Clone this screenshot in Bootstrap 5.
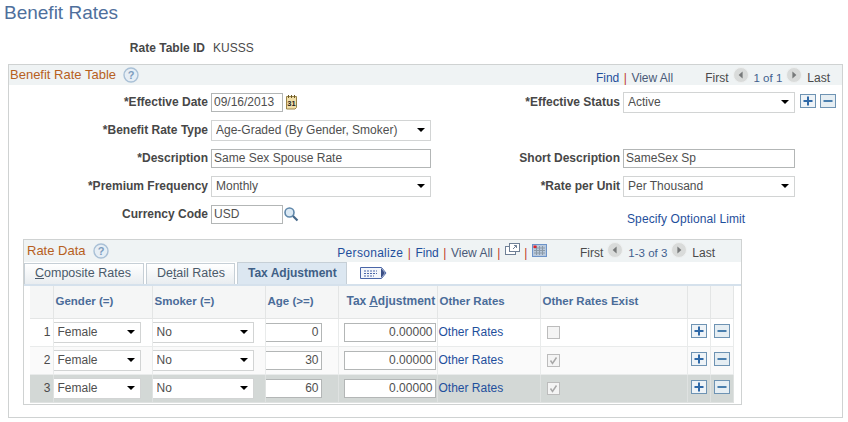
<!DOCTYPE html>
<html lang="en">
<head>
<meta charset="utf-8">
<title>Benefit Rates</title>
<link href="https://cdn.jsdelivr.net/npm/bootstrap@5.3.0/dist/css/bootstrap.min.css" rel="stylesheet">
<style>
html,body{background:#fff;margin:0;overflow:hidden}
body{font:12px/14px "Liberation Sans",Arial,sans-serif;color:#4a4a4a;width:848px;height:422px}
a{color:#1f4f9c;text-decoration:none}
.page-title{font-size:19px;line-height:24px;color:#4f6f9c;margin:0;padding:1px 0 0 4px;height:25px;font-weight:400}
.id-line{height:14px;margin-top:16px;padding-left:9px}
.lbl{font-weight:700;color:#474747;text-align:right}
.outer-box{margin:9px 0 0 8px;width:835px;height:354px;border:1px solid #cfd2d2}
.band{background:#eff3f4;display:flex;align-items:center}
.outer-band{height:20px;padding:0 12px 0 1px}
.band-title{color:#b75f1e;font-size:13px;line-height:16px}
.help{margin-left:7px;flex:none}
.sep{color:#c0392b;padding:0 4.500px}
.nav-ico{flex:none;margin:0 5px 6px 4px}
.tool-ico{flex:none;margin-bottom:6px}
.page-count{color:#3f5f8e;font-size:11.500px}
.grey-link{color:#4a5a78}
.wide-link{letter-spacing:.3px}
.form-rows{display:grid;grid-template-columns:199px 220px 186px 172px auto;column-gap:3px;grid-auto-rows:28px;align-items:center;margin-top:3px;height:140px}
.form-rows .form-control,.form-rows .form-select,.sheet .form-control,.sheet .form-select{font:12px/14px "Liberation Sans",Arial,sans-serif;color:#4f4f4f;border-radius:0;height:19px;min-height:0;padding:0 2px;border:1px solid #b3b6b6;box-shadow:none}
.form-select{background-color:#fff;background-image:url("data:image/svg+xml,%3Csvg xmlns='http://www.w3.org/2000/svg' width='8' height='4'%3E%3Cpath d='M0 0h8L4 4z' fill='%23000'/%3E%3C/svg%3E");background-repeat:no-repeat;background-position:right 5px center;background-size:8px 4px;padding-left:4px!important;border-color:#d2d4d4!important;height:21px!important}
.wide-field{width:220px}
.date-field{width:72px}
.code-field{width:72px}
.addrem{display:flex;gap:4px;padding:0 0 2px 2px}
.pm{width:16px;height:14px;flex:none;display:block}
.limit-cell{padding:12px 0 0 4px;align-self:start;letter-spacing:.1px}
.inner-box{margin:11px 0 0 14px;width:719px;height:166px;border:1px solid #cfd2d2}
.inner-band{height:22px;padding:0 26px 0 3px}
.grid-links{margin-left:auto;display:flex;align-items:center;padding-top:6px}
.inner-band .grid-links{padding-top:4px}
.paging{display:flex;align-items:center;padding-top:6px}
.inner-band .paging{padding-top:4px;margin-left:33px}
.outer-band .paging{margin-left:32px}
.tabstrip{display:flex;height:24px;align-items:flex-end;gap:2px;padding-left:0;border-bottom:2px solid #d5e1ec}
.tabbish{height:21px;padding:2px 9px 0 10px;border:1px solid #c6cfd6;border-bottom:0;background:linear-gradient(#fff,#e9edf0);font-size:12.500px;color:#4a5a6a}
.tab-first{padding-right:12px}
.tabbish.on{background:#dce7f1;font-weight:700;font-size:12px;color:#3f5f86;height:22px;padding-top:3px}
.tabmore{align-self:center;margin-left:11px}
.sheet{border-collapse:collapse;table-layout:fixed;width:703px;margin-left:6px}
.sheet th{height:32px;background:#f5f6f6;color:#4a6c99;font-weight:700;font-size:11.500px;padding:0 0 1px 2px;border-right:1px solid #e3e5e5;border-bottom:1px solid #e3e5e5;white-space:nowrap}
.sheet th.tax-head{font-size:12px;padding-left:8px}
.sheet td{height:28px;padding:0;border-right:1px solid #e9ebeb;border-bottom:1px solid #e9ebeb;vertical-align:middle}
.sheet tr.alt td{background:#fafafa}
.sheet tr.picked td{background:#d3d8d6;border-color:#dfe2e1}
.sheet td.rn{text-align:right;padding:0 2px 0 0}
.sheet td.linkcell{padding-left:1px}
.sheet .sel-g{width:88px;margin-left:-1px}
.sheet .sel-s{width:102px;margin-left:-1px}
.sheet .age-in{width:57px;margin-left:-1px}
.sheet .tax-in{width:92px;margin-left:5px}
.chk{display:block;margin-left:6px}
.cell-pm{display:block;margin:-2px auto 0}
</style>
</head>
<body>
<svg width="0" height="0" class="position-absolute">
<defs>
<symbol id="i-help" viewBox="0 0 16 16"><circle cx="8" cy="8" r="7" fill="#e6eef5" stroke="#a9c0d6" stroke-width="1.4"/><text x="8" y="12" text-anchor="middle" font-family="Liberation Sans" font-size="11" font-weight="700" fill="#7d9cbd">?</text></symbol>
<symbol id="i-prev" viewBox="0 0 16 16"><circle cx="8" cy="8" r="7.500" fill="#d9dbda" stroke="#eef0f0"/><path d="M9.600 4.400v7L5.600 8z" fill="#77797a"/></symbol>
<symbol id="i-next" viewBox="0 0 16 16"><circle cx="8" cy="8" r="7.500" fill="#d9dbda" stroke="#eef0f0"/><path d="M6.400 4.400v7l4-3.400z" fill="#77797a"/></symbol>
<symbol id="i-plus" viewBox="0 0 16 14"><rect x=".5" y=".5" width="15" height="13" fill="#eef3f7" stroke="#6e93b3"/><path d="M7 2.500h2v3.500h3.500v2H9v3.500H7V8H3.500V6H7z" fill="#2f69a8"/></symbol>
<symbol id="i-minus" viewBox="0 0 16 14"><rect x=".5" y=".5" width="15" height="13" fill="#e6eef3" stroke="#6e93b3"/><rect x="3.500" y="6" width="9" height="2" fill="#4a7fae"/></symbol>
</defs>
</svg>

<h1 class="page-title">Benefit Rates</h1>
<div class="id-line d-flex">
  <span class="lbl" style="width:196px">Rate Table ID</span><span class="ms-2">KUSSS</span>
</div>

<div class="outer-box">
  <div class="band outer-band">
    <span class="band-title">Benefit Rate Table</span>
    <svg class="help" width="16" height="16"><use href="#i-help"/></svg>
    <div class="grid-links"><a href="#">Find</a><span class="sep">|</span><a href="#" class="grey-link">View All</a></div>
    <div class="paging"><span>First</span><svg class="nav-ico" width="16" height="16"><use href="#i-prev"/></svg><span class="page-count">1 of 1</span><svg class="nav-ico" width="16" height="16"><use href="#i-next"/></svg><span>Last</span></div>
  </div>

  <div class="form-rows">
    <div class="lbl">*Effective Date</div>
    <div class="d-flex align-items-center"><input class="form-control date-field" value="09/16/2013">
      <svg style="margin-left:2px" width="13" height="16" viewBox="0 0 13 16"><path d="M1.500 2.500h10v11l-1.500 1.500h-8.500z" fill="#f1dfa8" stroke="#9a8448"/><path d="M3.500 1v3M6.500 1v3M9.500 1v3" stroke="#6b5a2a"/><text x="6.500" y="12" text-anchor="middle" font-family="Liberation Sans" font-size="7.500" font-weight="700" fill="#222">31</text></svg></div>
    <div class="lbl">*Effective Status</div>
    <select class="form-select"><option>Active</option></select>
    <div class="addrem"><svg class="pm"><use href="#i-plus"/></svg><svg class="pm"><use href="#i-minus"/></svg></div>

    <div class="lbl">*Benefit Rate Type</div>
    <select class="form-select wide-field"><option>Age-Graded (By Gender, Smoker)</option></select>
    <div></div><div></div><div></div>

    <div class="lbl">*Description</div>
    <input class="form-control wide-field" value="Same Sex Spouse Rate">
    <div class="lbl">Short Description</div>
    <input class="form-control" value="SameSex Sp">
    <div></div>

    <div class="lbl">*Premium Frequency</div>
    <select class="form-select wide-field"><option>Monthly</option></select>
    <div class="lbl">*Rate per Unit</div>
    <select class="form-select"><option>Per Thousand</option></select>
    <div></div>

    <div class="lbl">Currency Code</div>
    <div class="d-flex align-items-center"><input class="form-control code-field" value="USD">
      <svg width="16" height="16" viewBox="0 0 16 16"><circle cx="6.500" cy="6.500" r="4.500" fill="#dbe9f4" stroke="#5f87aa" stroke-width="1.600"/><path d="M10 10l4.500 4.500" stroke="#47698a" stroke-width="2.200"/></svg></div>
    <div></div>
    <div class="limit-cell"><a href="#">Specify Optional Limit</a></div>
    <div></div>
  </div>

  <div class="inner-box">
    <div class="band inner-band">
      <span class="band-title">Rate Data</span>
      <svg class="help" width="16" height="16"><use href="#i-help"/></svg>
      <div class="grid-links"><a href="#" class="wide-link">Personalize</a><span class="sep">|</span><a href="#">Find</a><span class="sep">|</span><a href="#" class="grey-link">View All</a><span class="sep">|</span>
        <svg width="15" height="14" viewBox="0 0 15 14" class="tool-ico"><rect x=".5" y="3.500" width="10" height="8" fill="#fff" stroke="#6f8096"/><rect x="4.500" y=".5" width="10" height="8" fill="#fff" stroke="#6f8096"/><path d="M8 6l3.500-3.500M9 2.500h2.500V5" fill="none" stroke="#6f8096"/></svg>
        <span class="sep">|</span>
        <svg width="15" height="13" viewBox="0 0 15 13" class="tool-ico"><rect x=".5" y=".5" width="14" height="12" fill="#b9c9dc" stroke="#6c93c9"/><path d="M2 4h11M2 6.500h11M2 9h11M4.500 2v9M7.500 2v9M10.500 2v9" stroke="#8b9aa8"/><rect x="1.500" y="1.500" width="3" height="2.500" fill="#e0202a"/></svg>
      </div>
      <div class="paging"><span>First</span><svg class="nav-ico" width="16" height="16"><use href="#i-prev"/></svg><span class="page-count">1-3 of 3</span><svg class="nav-ico" width="16" height="16"><use href="#i-next"/></svg><span>Last</span></div>
    </div>
    <div class="tabstrip">
      <div class="tabbish tab-first"><u>C</u>omposite Rates</div>
      <div class="tabbish">De<u>t</u>ail Rates</div>
      <div class="tabbish on">Tax Adjustment</div>
      <svg class="tabmore" width="27" height="14" viewBox="0 0 27 14"><path d="M.5 1.500h21l4.500 5.500-4.500 5.500H.5z" fill="#f3f6fb" stroke="#4a66a8"/><path d="M21 2v10l4-5z" fill="#3a4f86"/><path d="M4 5h13M4 7.500h13M4 10h10" stroke="#4a66a8" stroke-dasharray="2 1"/></svg>
    </div>
    <table class="sheet">
      <colgroup><col style="width:23px"><col style="width:99px"><col style="width:113px"><col style="width:73px"><col style="width:99px"><col style="width:103px"><col style="width:147px"><col style="width:23px"><col style="width:23px"></colgroup>
      <thead><tr><th></th><th>Gender (=)</th><th>Smoker (=)</th><th>Age (&gt;=)</th><th class="tax-head">Tax <u>A</u>djustment</th><th>Other Rates</th><th>Other Rates Exist</th><th></th><th></th></tr></thead>
      <tbody>
        <tr><td class="rn">1</td><td><select class="form-select sel-g"><option>Female</option></select></td><td><select class="form-select sel-s"><option>No</option></select></td><td><input class="form-control age-in text-end" value="0"></td><td><input class="form-control tax-in text-end" value="0.00000"></td><td class="linkcell"><a href="#">Other Rates</a></td><td><svg class="chk" width="13" height="13"><rect x=".5" y=".5" width="12" height="12" fill="#f4f4f4" stroke="#bcbcbc"/></svg></td><td><svg class="pm cell-pm"><use href="#i-plus"/></svg></td><td><svg class="pm cell-pm"><use href="#i-minus"/></svg></td></tr>
        <tr class="alt"><td class="rn">2</td><td><select class="form-select sel-g"><option>Female</option></select></td><td><select class="form-select sel-s"><option>No</option></select></td><td><input class="form-control age-in text-end" value="30"></td><td><input class="form-control tax-in text-end" value="0.00000"></td><td class="linkcell"><a href="#">Other Rates</a></td><td><svg class="chk" width="13" height="13"><rect x=".5" y=".5" width="12" height="12" fill="#f4f4f4" stroke="#bcbcbc"/><path d="M3.500 6.500l2 3 4-6" fill="none" stroke="#a8a8a8" stroke-width="1.500"/></svg></td><td><svg class="pm cell-pm"><use href="#i-plus"/></svg></td><td><svg class="pm cell-pm"><use href="#i-minus"/></svg></td></tr>
        <tr class="picked"><td class="rn">3</td><td><select class="form-select sel-g"><option>Female</option></select></td><td><select class="form-select sel-s"><option>No</option></select></td><td><input class="form-control age-in text-end" value="60"></td><td><input class="form-control tax-in text-end" value="0.00000"></td><td class="linkcell"><a href="#">Other Rates</a></td><td><svg class="chk" width="13" height="13"><rect x=".5" y=".5" width="12" height="12" fill="#f4f4f4" stroke="#bcbcbc"/><path d="M3.500 6.500l2 3 4-6" fill="none" stroke="#a8a8a8" stroke-width="1.500"/></svg></td><td><svg class="pm cell-pm"><use href="#i-plus"/></svg></td><td><svg class="pm cell-pm"><use href="#i-minus"/></svg></td></tr>
      </tbody>
    </table>
  </div>
</div>
</body>
</html>
